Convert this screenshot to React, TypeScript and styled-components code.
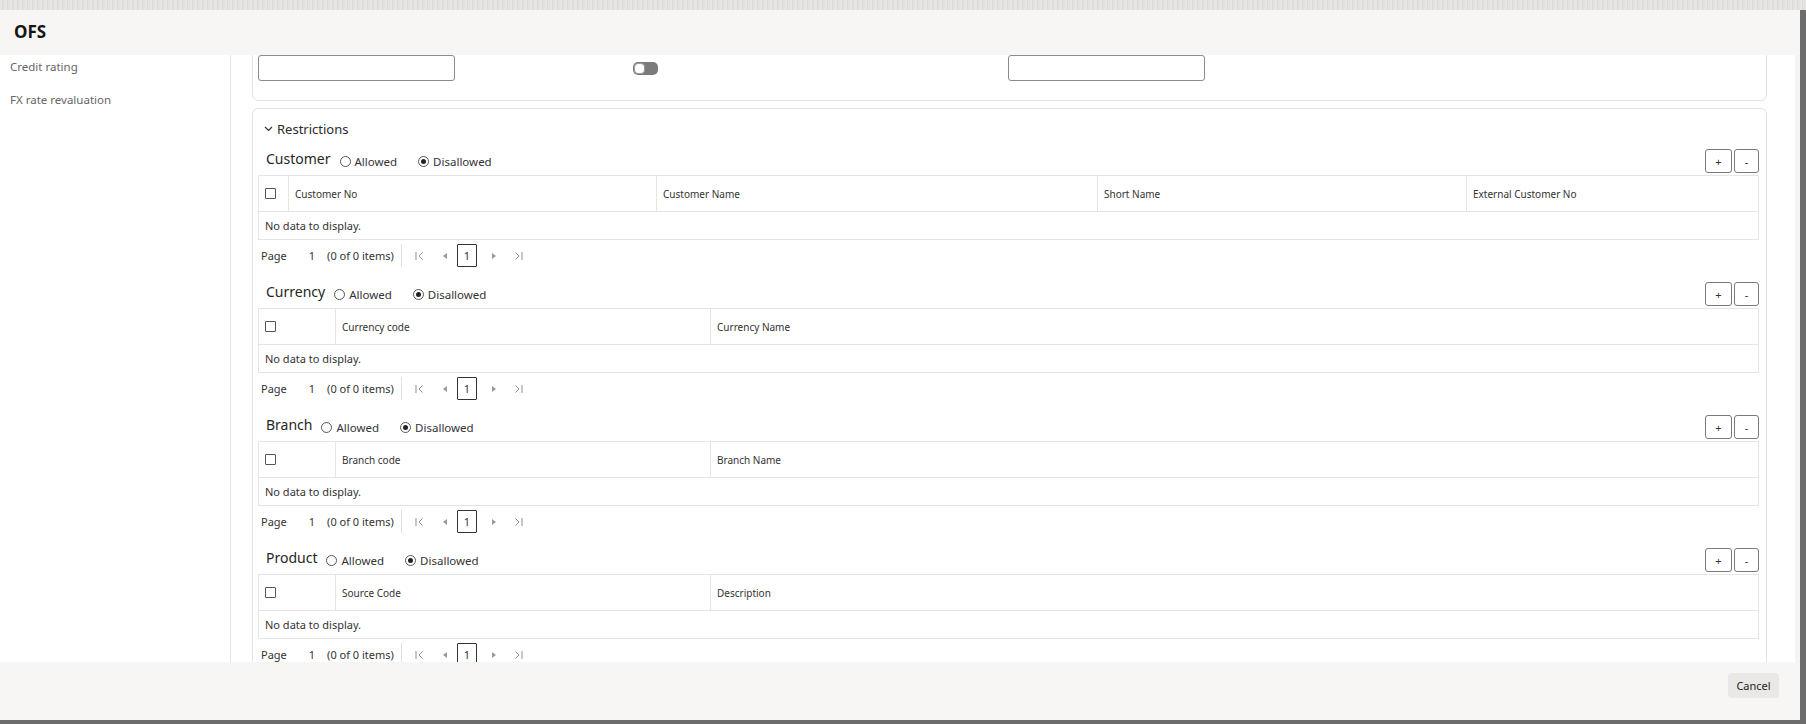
import React from 'react';
import styled, { createGlobalStyle } from 'styled-components';

const GlobalStyle = createGlobalStyle`
  html, body {
    margin: 0;
    padding: 0;
  }
  body {
    width: 1806px;
    height: 724px;
    overflow: hidden;
    background: #6c6c6c;
    font-family: 'Noto Sans', 'Open Sans', sans-serif;
    color: #2b2b2b;
  }
  * {
    box-sizing: border-box;
  }
`;

const Page = styled.div`
  width: 1806px;
  height: 724px;
  display: flex;
  flex-direction: column;
  background: #6c6c6c;
`;

const TopStrip = styled.div`
  height: 10px;
  flex-shrink: 0;
  background: repeating-linear-gradient(
    90deg,
    #e8e6e3 0 2px,
    #dcdad6 2px 3px,
    #e4e2de 3px 5px
  );
`;

const Dialog = styled.div`
  width: 1800px;
  height: 710px;
  display: flex;
  flex-direction: column;
  background: #f7f6f4;
`;

const DialogHeader = styled.div`
  height: 45px;
  flex-shrink: 0;
  display: flex;
  align-items: center;
  padding: 0 0 3px 14px;
  font-size: 17px;
  font-weight: 700;
  color: #161513;
`;

const DialogBody = styled.div`
  height: 607px;
  flex-shrink: 0;
  display: flex;
  background: #fff;
  border-right: 5px solid #f5f4f2;
  overflow: hidden;
`;

const Sidebar = styled.nav`
  width: 231px;
  flex-shrink: 0;
  border-right: 1px solid #e4e4e4;
  padding-top: 3px;
`;

const NavItem = styled.div`
  height: 18px;
  line-height: 18px;
  margin-bottom: 15px;
  padding-left: 10px;
  font-size: 11.5px;
  color: #666;
`;

const Main = styled.div`
  flex: 1;
  overflow: hidden;
  padding: 0 28px 0 21px;
`;

const ScrollContent = styled.div`
  margin-top: -30px;
  display: flex;
  flex-direction: column;
  gap: 7px;
`;

const Panel = styled.section`
  border: 1px solid #e3e3e3;
  border-radius: 6px;
  padding: 0 7px 0 5px;
`;

const FieldPanel = styled(Panel)`
  padding-top: 29px;
  padding-bottom: 19px;
`;

const FieldGrid = styled.div`
  display: grid;
  grid-template-columns: repeat(4, 375px);
  align-items: center;
`;

const TextInput = styled.div`
  width: 197px;
  height: 26px;
  border: 1px solid #8c8c8c;
  border-radius: 3px;
  background: #fff;
`;

const Toggle = styled.div`
  width: 25px;
  height: 13px;
  border-radius: 5px;
  background: #7b7b7b;
  display: flex;
  align-items: center;
  padding-left: 1px;
`;

const ToggleKnob = styled.span`
  width: 11px;
  height: 11px;
  border-radius: 4px;
  background: #fff;
  border: 1px solid #9a9a9a;
`;

const RestrictionsHeader = styled.div`
  height: 20px;
  margin: 10px 0 10px;
  display: flex;
  align-items: center;
  gap: 4px;
  padding-left: 6px;
  font-size: 13px;
  color: #2b2b2b;
`;

const Section = styled.div`
  display: flex;
  flex-direction: column;
`;

const SectionHead = styled.div`
  height: 26px;
  display: flex;
  align-items: flex-start;
  justify-content: space-between;
`;

const SectionLeft = styled.div`
  height: 24px;
  display: flex;
  align-items: center;
  padding-left: 8px;
`;

const SectionTitle = styled.span`
  font-size: 14px;
  color: #262626;
  margin-bottom: 6px;
  margin-right: 9px;
`;

const RadioOption = styled.label`
  display: flex;
  align-items: center;
  gap: 4px;
  font-size: 11.5px;
  color: #333;
  margin-right: 21px;
`;

const RadioCircle = styled.span<{ $checked: boolean }>`
  width: 11px;
  height: 11px;
  border-radius: 50%;
  border: 1px solid #555;
  background: #fff;
  display: flex;
  align-items: center;
  justify-content: center;
  &::after {
    content: '';
    width: 5px;
    height: 5px;
    border-radius: 50%;
    background: ${({ $checked }) => ($checked ? '#222' : 'transparent')};
  }
`;

const ButtonGroup = styled.div`
  display: flex;
  gap: 2px;
`;

const SmallButton = styled.button<{ $w: number }>`
  width: ${({ $w }) => $w}px;
  height: 24px;
  border: 1px solid #7a7a7a;
  border-radius: 3px;
  background: #fff;
  font-family: inherit;
  font-size: 11px;
  color: #333;
  padding: 0;
  line-height: 1;
`;

const Table = styled.div`
  border: 1px solid #e5e5e5;
`;

const HeaderRow = styled.div<{ $cols: string }>`
  display: grid;
  grid-template-columns: ${({ $cols }) => $cols};
  height: 36px;
  border-bottom: 1px solid #e5e5e5;
`;

const HeaderCell = styled.div`
  display: flex;
  align-items: center;
  padding-left: 6px;
  font-size: 10px;
  color: #333;
  & + & {
    border-left: 1px solid #e5e5e5;
  }
`;

const Checkbox = styled.span`
  width: 11px;
  height: 11px;
  border: 1px solid #555;
  border-radius: 1px;
  background: #fff;
`;

const EmptyRow = styled.div`
  height: 27px;
  display: flex;
  align-items: center;
  padding-left: 6px;
  font-size: 11px;
  color: #333;
`;

const Pager = styled.div`
  height: 23px;
  margin: 4px 0 15px;
  display: flex;
  align-items: center;
  font-size: 11px;
  color: #333;
`;

const PagerText = styled.span<{ $ml: number }>`
  margin-left: ${({ $ml }) => $ml}px;
`;

const PagerDivider = styled.span`
  width: 1px;
  height: 23px;
  background: #e0e0e0;
  margin: 0 0 0 7px;
`;

const PagerIcon = styled.span<{ $ml: number }>`
  margin-left: ${({ $ml }) => $ml}px;
  display: flex;
  align-items: center;
`;

const PageBox = styled.span`
  width: 20px;
  height: 23px;
  margin-left: 10px;
  border: 1px solid #333;
  border-radius: 1px;
  display: flex;
  align-items: center;
  justify-content: center;
  font-size: 11px;
`;

const DialogFooter = styled.div`
  flex: 1;
  display: flex;
  justify-content: flex-end;
  align-items: flex-start;
  padding: 11px 21px 0 0;
`;

const CancelButton = styled.button`
  width: 51px;
  height: 25px;
  border: none;
  border-radius: 4px;
  background: #e9e8e6;
  font-family: inherit;
  font-size: 11px;
  color: #222;
  padding: 0;
`;

const Chevron = () => (
  <svg width="9" height="6" viewBox="0 0 9 6">
    <path d="M1 1 L4.5 4.5 L8 1" fill="none" stroke="#333" strokeWidth="1.2" />
  </svg>
);

const FirstIcon = () => (
  <svg width="9" height="10" viewBox="0 0 9 10">
    <path d="M1 1 V9 M7.5 1.5 L4 5 L7.5 8.5" fill="none" stroke="#8f8f8f" strokeWidth="1" />
  </svg>
);

const LastIcon = () => (
  <svg width="9" height="10" viewBox="0 0 9 10">
    <path d="M8 1 V9 M1.5 1.5 L5 5 L1.5 8.5" fill="none" stroke="#8f8f8f" strokeWidth="1" />
  </svg>
);

const PrevIcon = () => (
  <svg width="4" height="6" viewBox="0 0 4 6">
    <path d="M4 0 L0 3 L4 6 Z" fill="#9a9a9a" />
  </svg>
);

const NextIcon = () => (
  <svg width="4" height="6" viewBox="0 0 4 6">
    <path d="M0 0 L4 3 L0 6 Z" fill="#9a9a9a" />
  </svg>
);

type RestrictionProps = {
  title: string;
  cols: string;
  columns: string[];
};

const Restriction: React.FC<RestrictionProps> = ({ title, cols, columns }) => (
  <Section>
    <SectionHead>
      <SectionLeft>
        <SectionTitle>{title}</SectionTitle>
        <RadioOption>
          <RadioCircle $checked={false} />
          Allowed
        </RadioOption>
        <RadioOption>
          <RadioCircle $checked />
          Disallowed
        </RadioOption>
      </SectionLeft>
      <ButtonGroup>
        <SmallButton $w={27}>+</SmallButton>
        <SmallButton $w={25}>-</SmallButton>
      </ButtonGroup>
    </SectionHead>
    <Table>
      <HeaderRow $cols={cols}>
        <HeaderCell>
          <Checkbox />
        </HeaderCell>
        {columns.map((c) => (
          <HeaderCell key={c}>{c}</HeaderCell>
        ))}
      </HeaderRow>
      <EmptyRow>No data to display.</EmptyRow>
    </Table>
    <Pager>
      <PagerText $ml={3}>Page</PagerText>
      <PagerText $ml={22}>1</PagerText>
      <PagerText $ml={12}>(0 of 0 items)</PagerText>
      <PagerDivider />
      <PagerIcon $ml={13}>
        <FirstIcon />
      </PagerIcon>
      <PagerIcon $ml={19}>
        <PrevIcon />
      </PagerIcon>
      <PageBox>1</PageBox>
      <PagerIcon $ml={15}>
        <NextIcon />
      </PagerIcon>
      <PagerIcon $ml={18}>
        <LastIcon />
      </PagerIcon>
    </Pager>
  </Section>
);

const twoCols = '76px 375px 1fr';

const restrictions: RestrictionProps[] = [
  {
    title: 'Customer',
    cols: '29px 368px 441px 369px 1fr',
    columns: ['Customer No', 'Customer Name', 'Short Name', 'External Customer No'],
  },
  { title: 'Currency', cols: twoCols, columns: ['Currency code', 'Currency Name'] },
  { title: 'Branch', cols: twoCols, columns: ['Branch code', 'Branch Name'] },
  { title: 'Product', cols: twoCols, columns: ['Source Code', 'Description'] },
];

export default function App() {
  return (
    <>
      <GlobalStyle />
      <Page>
        <TopStrip />
        <Dialog>
          <DialogHeader>OFS</DialogHeader>
          <DialogBody>
            <Sidebar>
              <NavItem>Credit rating</NavItem>
              <NavItem>FX rate revaluation</NavItem>
            </Sidebar>
            <Main>
              <ScrollContent>
                <FieldPanel>
                  <FieldGrid>
                    <TextInput />
                    <Toggle>
                      <ToggleKnob />
                    </Toggle>
                    <TextInput />
                  </FieldGrid>
                </FieldPanel>
                <Panel>
                  <RestrictionsHeader>
                    <Chevron />
                    Restrictions
                  </RestrictionsHeader>
                  {restrictions.map((r) => (
                    <Restriction key={r.title} {...r} />
                  ))}
                </Panel>
              </ScrollContent>
            </Main>
          </DialogBody>
          <DialogFooter>
            <CancelButton>Cancel</CancelButton>
          </DialogFooter>
        </Dialog>
      </Page>
    </>
  );
}
